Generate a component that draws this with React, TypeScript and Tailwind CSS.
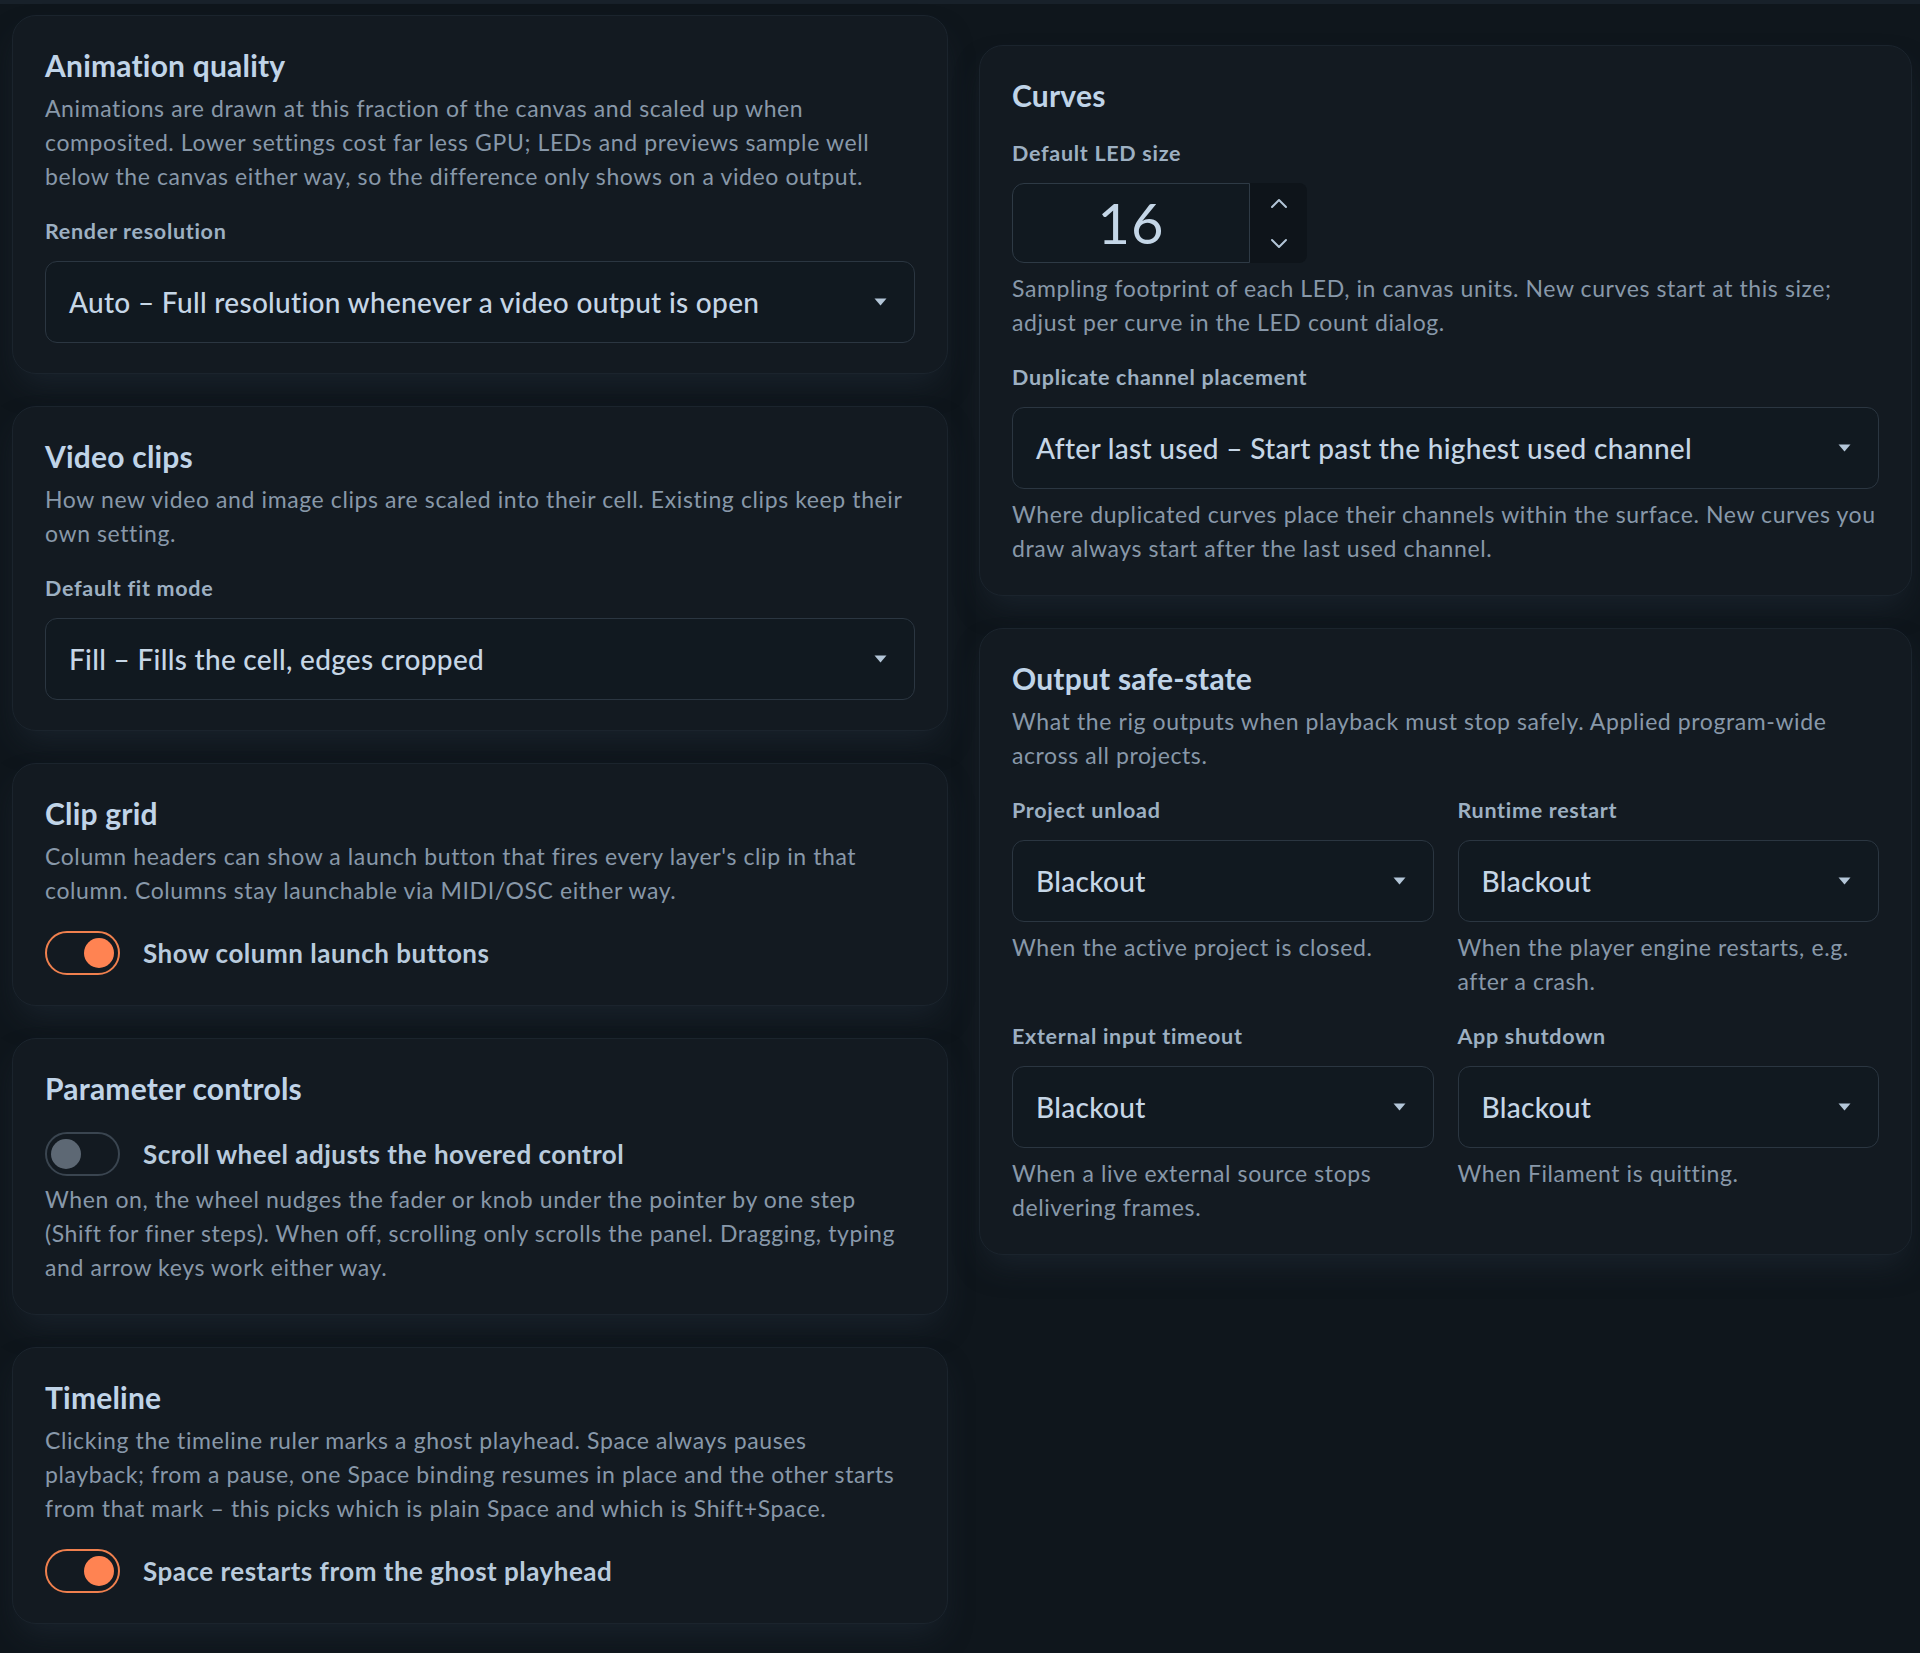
import React from "react";

const FONT = "font-['Lato',sans-serif]";

function Card({ children, className = "" }: { children: React.ReactNode; className?: string }) {
  return (
    <section
      className={`rounded-[24px] border border-[#1b242d] bg-[#131a21] px-[32px] pt-[29px] pb-[30px] shadow-[0_16px_30px_-8px_rgba(34,46,58,0.55)] ${className}`}
    >
      {children}
    </section>
  );
}

function Title({ children }: { children: React.ReactNode }) {
  return <h2 className="text-[30px] leading-[40px] font-bold text-[#c0d4e8] tracking-[0.2px]">{children}</h2>;
}

function Desc({ lines, className = "" }: { lines: string[]; className?: string }) {
  return (
    <p className={`text-[23px] leading-[34px] tracking-[0.6px] text-[#8898a9] ${className}`}>
      {lines.map((l, i) => (
        <span key={i} className="block whitespace-nowrap">
          {l}
        </span>
      ))}
    </p>
  );
}

function Label({ children, className = "" }: { children: React.ReactNode; className?: string }) {
  return (
    <div className={`text-[21.5px] leading-[28px] font-bold tracking-[0.7px] text-[#9db0c2] ${className}`}>
      {children}
    </div>
  );
}

function Caret() {
  return (
    <svg width="13" height="8" viewBox="0 0 13 8" className="shrink-0">
      <path d="M0.5 0.5 H12.5 L6.5 7.5 Z" fill="#b4c6d8" />
    </svg>
  );
}

function Select({ value, className = "" }: { value: string; className?: string }) {
  return (
    <div
      className={`flex h-[82px] items-center justify-between rounded-[12px] border border-[#2b3641] bg-[#111920] pl-[23px] pr-[27px] ${className}`}
    >
      <span className="text-[28px] font-medium tracking-[0.3px] text-[#c6d6e6] whitespace-nowrap">{value}</span>
      <Caret />
    </div>
  );
}

function Toggle({ on }: { on: boolean }) {
  return (
    <span
      className={`flex h-[44px] w-[75px] shrink-0 items-center rounded-full border-[2.5px] px-[4px] ${
        on ? "justify-end border-[#f0804e]" : "justify-start border-[#3a4550]"
      }`}
    >
      <span className={`h-[30px] w-[30px] rounded-full ${on ? "bg-[#ff8352]" : "bg-[#5d6874]"}`} />
    </span>
  );
}

function ToggleRow({ on, label, className = "" }: { on: boolean; label: string; className?: string }) {
  return (
    <div className={`flex items-center gap-[23px] ${className}`}>
      <Toggle on={on} />
      <span className="text-[26px] font-bold tracking-[0.5px] text-[#b9cbdd]">{label}</span>
    </div>
  );
}

function NumberInput() {
  return (
    <div className="mt-4 flex h-[80px] w-[295px]">
      <div className="flex w-[238px] items-center justify-center rounded-l-[12px] border border-[#2e3a45] bg-[#111920] text-[56px] font-normal tracking-[1px] text-[#c4d6e7]">
        16
      </div>
      <div className="flex w-[57px] flex-col items-center justify-center gap-[29px] rounded-r-[8px] bg-[#0e141a]">
        <svg width="18" height="11" viewBox="0 0 18 11">
          <polyline points="2,9 9,2 16,9" fill="none" stroke="#b3c6d8" strokeWidth="2" strokeLinecap="round" strokeLinejoin="round" />
        </svg>
        <svg width="18" height="11" viewBox="0 0 18 11">
          <polyline points="2,2 9,9 16,2" fill="none" stroke="#b3c6d8" strokeWidth="2" strokeLinecap="round" strokeLinejoin="round" />
        </svg>
      </div>
    </div>
  );
}

function SafeCell({ label, desc }: { label: string; desc: string[] }) {
  return (
    <div>
      <Label>{label}</Label>
      <Select value="Blackout" className="mt-4" />
      <Desc className="mt-2" lines={desc} />
    </div>
  );
}

export default function App() {
  return (
    <div className={`min-h-[1653px] w-full bg-[#0f161c] ${FONT}`}>
      <div className="h-[4px] bg-[#18212a]" />
      <div className="flex items-start gap-[31px] pl-[12px] pt-[11px]">
        <div className="flex w-[936px] flex-col gap-[32px]">
          <Card>
            <Title>Animation quality</Title>
            <Desc
              className="mt-[6px]"
              lines={[
                "Animations are drawn at this fraction of the canvas and scaled up when",
                "composited. Lower settings cost far less GPU; LEDs and previews sample well",
                "below the canvas either way, so the difference only shows on a video output.",
              ]}
            />
            <Label className="mt-6">Render resolution</Label>
            <Select value="Auto – Full resolution whenever a video output is open" className="mt-4" />
          </Card>

          <Card>
            <Title>Video clips</Title>
            <Desc
              className="mt-[6px]"
              lines={[
                "How new video and image clips are scaled into their cell. Existing clips keep their",
                "own setting.",
              ]}
            />
            <Label className="mt-6">Default fit mode</Label>
            <Select value="Fill – Fills the cell, edges cropped" className="mt-4" />
          </Card>

          <Card>
            <Title>Clip grid</Title>
            <Desc
              className="mt-[6px]"
              lines={[
                "Column headers can show a launch button that fires every layer's clip in that",
                "column. Columns stay launchable via MIDI/OSC either way.",
              ]}
            />
            <ToggleRow on label="Show column launch buttons" className="mt-6" />
          </Card>

          <Card>
            <Title>Parameter controls</Title>
            <ToggleRow on={false} label="Scroll wheel adjusts the hovered control" className="mt-6" />
            <Desc
              className="mt-[6px]"
              lines={[
                "When on, the wheel nudges the fader or knob under the pointer by one step",
                "(Shift for finer steps). When off, scrolling only scrolls the panel. Dragging, typing",
                "and arrow keys work either way.",
              ]}
            />
          </Card>

          <Card>
            <Title>Timeline</Title>
            <Desc
              className="mt-[6px]"
              lines={[
                "Clicking the timeline ruler marks a ghost playhead. Space always pauses",
                "playback; from a pause, one Space binding resumes in place and the other starts",
                "from that mark – this picks which is plain Space and which is Shift+Space.",
              ]}
            />
            <ToggleRow on label="Space restarts from the ghost playhead" className="mt-6" />
          </Card>
        </div>

        <div className="mt-[30px] flex w-[933px] flex-col gap-[32px]">
          <Card>
            <Title>Curves</Title>
            <Label className="mt-6">Default LED size</Label>
            <NumberInput />
            <Desc
              className="mt-2"
              lines={[
                "Sampling footprint of each LED, in canvas units. New curves start at this size;",
                "adjust per curve in the LED count dialog.",
              ]}
            />
            <Label className="mt-6">Duplicate channel placement</Label>
            <Select value="After last used – Start past the highest used channel" className="mt-4" />
            <Desc
              className="mt-2"
              lines={[
                "Where duplicated curves place their channels within the surface. New curves you",
                "draw always start after the last used channel.",
              ]}
            />
          </Card>

          <Card>
            <Title>Output safe-state</Title>
            <Desc
              className="mt-[6px]"
              lines={[
                "What the rig outputs when playback must stop safely. Applied program-wide",
                "across all projects.",
              ]}
            />
            <div className="mt-6 grid grid-cols-2 gap-x-6 gap-y-6">
              <SafeCell label="Project unload" desc={["When the active project is closed."]} />
              <SafeCell label="Runtime restart" desc={["When the player engine restarts, e.g.", "after a crash."]} />
              <SafeCell
                label="External input timeout"
                desc={["When a live external source stops", "delivering frames."]}
              />
              <SafeCell label="App shutdown" desc={["When Filament is quitting."]} />
            </div>
          </Card>
        </div>
      </div>
    </div>
  );
}
